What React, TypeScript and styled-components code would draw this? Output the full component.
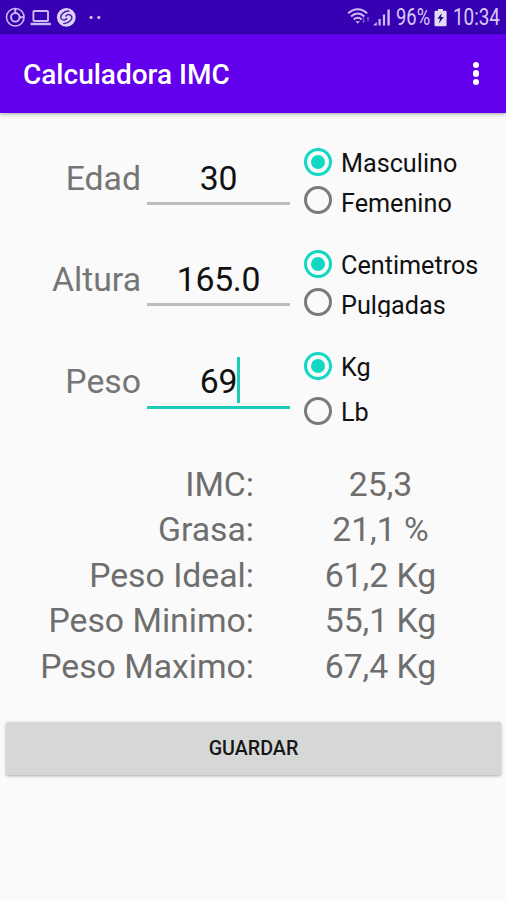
import { useState } from 'react';
import styled, { createGlobalStyle } from 'styled-components';

interface Option {
  label: string;
  clipped?: boolean;
}

interface Field {
  label: string;
  value: string;
  focused?: boolean;
  options: Option[];
  rowHeight: number;
}

const FIELDS: Field[] = [
  {
    label: 'Edad',
    value: '30',
    rowHeight: 38,
    options: [{ label: 'Masculino' }, { label: 'Femenino' }],
  },
  {
    label: 'Altura',
    value: '165.0',
    rowHeight: 38,
    options: [{ label: 'Centimetros' }, { label: 'Pulgadas', clipped: true }],
  },
  {
    label: 'Peso',
    value: '69',
    focused: true,
    rowHeight: 45,
    options: [{ label: 'Kg' }, { label: 'Lb' }],
  },
];

const RESULTS = [
  { label: 'IMC:', value: '25,3' },
  { label: 'Grasa:', value: '21,1 %' },
  { label: 'Peso Ideal:', value: '61,2 Kg' },
  { label: 'Peso Minimo:', value: '55,1 Kg' },
  { label: 'Peso Maximo:', value: '67,4 Kg' },
];

function StatusIcons() {
  return (
    <svg width="106" height="34" viewBox="0 0 106 34" fill="none" stroke="#cbbcf3">
      <circle cx="15.3" cy="17.3" r="8.8" strokeWidth="1.5" />
      <circle cx="15.3" cy="17.3" r="4.3" strokeWidth="1.9" />
      <path d="M15.3 8.5v4.5M19.6 17.3h4.5" strokeWidth="1.9" />
      <rect x="33.4" y="11" width="14.6" height="10" rx="0.8" strokeWidth="1.9" />
      <path d="M30.5 24h20.4" strokeWidth="2.4" />
      <circle cx="66.3" cy="17.3" r="9.4" fill="#dcd3f6" stroke="none" />
      <g stroke="#4a1fb5" strokeWidth="1.5" strokeLinecap="round">
        <path d="M68.8 11.1c-2.6-.3-5.2 1.3-6.9 3.2-1.7 2-1.4 4 .2 5.2 1.6 1.1 3.2.6 4.7-.9" />
        <path d="M63.8 23.5c2.6.3 5.2-1.3 6.9-3.2 1.7-2 1.4-4-.2-5.2-1.6-1.1-3.2-.6-4.7.9" />
      </g>
      <circle cx="91.1" cy="17.4" r="1.6" fill="#cbbcf3" stroke="none" />
      <circle cx="98.8" cy="17.4" r="1.6" fill="#cbbcf3" stroke="none" />
    </svg>
  );
}

function SignalIcons() {
  return (
    <svg width="48" height="34" viewBox="0 0 48 34" fill="none" stroke="#cbbcf3">
      <g strokeWidth="2">
        <path d="M1.2 13.4C6.7 7.8 14.7 7.8 20.2 13.4" />
        <path d="M4.1 16.5c3.9-3.9 9.3-3.9 13.2 0" />
        <path d="M6.8 19.5c2.2-2.3 5.6-2.3 7.8 0" />
      </g>
      <path d="M8.4 21.2H13l-2.3 2.6z" fill="#cbbcf3" stroke="none" />
      <path d="M16.6 17.5v4.4M21 17.2v4.4" stroke="#6f4bcb" strokeWidth="1.5" />
      <path d="M14.8 20.8l1.8 2.4 1.8-2.4zM19.2 18.8l1.8-2.4 1.8 2.4z" fill="#6f4bcb" stroke="none" />
      <path d="M26 25.5l3.8-3.6v3.6z" fill="#cbbcf3" stroke="none" />
      <path d="M32.6 25.5v-6.6M37 25.5V14.4" strokeWidth="2.2" />
      <path d="M41.6 25.5V9.5" strokeWidth="2.4" />
    </svg>
  );
}

function BatteryIcon() {
  return (
    <svg width="14" height="34" viewBox="0 0 14 34">
      <path d="M4 9h5v1.8h2.6q1 0 1 1v13.4q0 1-1 1H1.5q-1 0-1-1V11.8q0-1 1-1H4z" fill="#e3dbf8" />
      <path d="M7.8 12.9L3.4 18.8h2.7l-1.3 4.6L9.8 17H7z" fill="#280a84" />
    </svg>
  );
}

export default function App() {
  const [selected, setSelected] = useState([0, 0, 0]);

  const select = (field: number, option: number) => {
    setSelected(selected.map((s, i) => (i === field ? option : s)));
  };

  return (
    <Screen>
      <GlobalStyle />
      <StatusBar>
        <StatusIcons />
        <StatusRight>
          <SignalIcons />
          <StatusText width={38} gap={1}>
            <Condensed scale={0.8}>96%</Condensed>
          </StatusText>
          <BatteryIcon />
          <StatusText width={48} gap={5}>
            <Condensed scale={0.82}>10:34</Condensed>
          </StatusText>
        </StatusRight>
      </StatusBar>
      <AppBar>
        <Title>Calculadora IMC</Title>
        <MenuButton aria-label="menu">
          <Dot />
          <Dot />
          <Dot />
        </MenuButton>
      </AppBar>
      <Form>
        {FIELDS.map((field, i) => (
          <FormRow key={field.label}>
            <FieldLabel>{field.label}</FieldLabel>
            <FieldInput focused={field.focused}>
              <span>{field.value}</span>
              {field.focused && <Caret />}
            </FieldInput>
            <RadioGroup raised={field.focused}>
              {field.options.map((option, j) => (
                <RadioRow
                  key={option.label}
                  height={field.rowHeight}
                  onClick={() => select(i, j)}>
                  <Radio checked={selected[i] === j} />
                  <RadioLabel
                    lowered={j === 1 && field.rowHeight < 40}
                    clipped={option.clipped}>
                    {option.label}
                  </RadioLabel>
                </RadioRow>
              ))}
            </RadioGroup>
          </FormRow>
        ))}
      </Form>
      <Results>
        {RESULTS.map(({ label, value }) => (
          <ResultRow key={label}>
            <ResultLabel>{label}</ResultLabel>
            <ResultValue>{value}</ResultValue>
          </ResultRow>
        ))}
      </Results>
      <SaveButton>GUARDAR</SaveButton>
    </Screen>
  );
}

const GlobalStyle = createGlobalStyle`
  * {
    box-sizing: border-box;
  }
  body {
    margin: 0;
    background: #fafafa;
    font-family: Roboto, 'Liberation Sans', sans-serif;
  }
`;

const Screen = styled.div`
  width: 506px;
  height: 900px;
  overflow: hidden;
  background: #fafafa;
`;

const StatusBar = styled.div`
  display: flex;
  justify-content: space-between;
  height: 34px;
  padding-right: 5px;
  background: #3700b3;
`;

const StatusRight = styled.div`
  display: flex;
  align-items: center;
`;

const StatusText = styled.div<{ width: number; gap: number }>`
  width: ${({ width }) => width}px;
  margin-left: ${({ gap }) => gap}px;
  font-size: 23px;
  line-height: 34px;
  padding-top: 1px;
  white-space: nowrap;
  color: #d6caf6;
`;

const Condensed = styled.span<{ scale: number }>`
  display: inline-block;
  transform: scaleX(${({ scale }) => scale});
  transform-origin: left center;
`;

const AppBar = styled.header`
  display: flex;
  align-items: center;
  justify-content: space-between;
  height: 79px;
  padding: 0 27px 0 23px;
  background: #6200ee;
  box-shadow: 0 1px 4px rgba(0, 0, 0, 0.35);
`;

const Title = styled.h1`
  margin: 2px 0 0;
  font-size: 28px;
  font-weight: 500;
  line-height: 34px;
  color: #ffffff;
`;

const MenuButton = styled.button`
  display: flex;
  flex-direction: column;
  gap: 2.4px;
  padding: 0;
  border: none;
  background: none;
`;

const Dot = styled.span`
  width: 6.4px;
  height: 6.4px;
  border-radius: 50%;
  background: #ffffff;
`;

const Form = styled.div`
  padding-top: 30px;
`;

const FormRow = styled.div`
  display: grid;
  grid-template-columns: 141px 143px 1fr;
  column-gap: 6px;
  height: 101.5px;
`;

const FieldLabel = styled.label`
  margin-top: 15.5px;
  font-size: 33.75px;
  line-height: 40px;
  text-align: right;
  color: #757575;
`;

const FieldInput = styled.div<{ focused?: boolean }>`
  display: flex;
  justify-content: center;
  height: ${({ focused }) => (focused ? 62.5 : 61.5)}px;
  padding-top: 15.5px;
  font-size: 33.75px;
  line-height: 40px;
  letter-spacing: -0.3px;
  color: #111111;
  border-bottom: 3px solid ${({ focused }) => (focused ? '#1bcdb8' : '#bdbdbd')};
`;

const Caret = styled.span`
  width: 3px;
  height: 46px;
  margin: -5px -3px 0 0;
  background: #1bcdb8;
`;

const RadioGroup = styled.div<{ raised?: boolean }>`
  margin-top: ${({ raised }) => (raised ? -3 : 0)}px;
  padding-left: 8px;
`;

const RadioRow = styled.div<{ height: number }>`
  display: flex;
  align-items: center;
  height: ${({ height }) => height}px;
  cursor: pointer;
`;

const Radio = styled.span<{ checked: boolean }>`
  display: flex;
  align-items: center;
  justify-content: center;
  width: 28px;
  height: 28px;
  border: 3px solid ${({ checked }) => (checked ? '#10d8c2' : '#7a7a7a')};
  border-radius: 50%;
  &::after {
    content: '';
    width: 14px;
    height: 14px;
    border-radius: 50%;
    background: ${({ checked }) => (checked ? '#10d8c2' : 'transparent')};
  }
`;

const RadioLabel = styled.span<{ lowered?: boolean; clipped?: boolean }>`
  height: ${({ clipped }) => (clipped ? 26 : 30)}px;
  margin-top: ${({ lowered, clipped }) => (clipped ? 4 : lowered ? 8 : 4)}px;
  margin-left: 9px;
  overflow: hidden;
  font-size: 25.2px;
  line-height: 30px;
  color: #111111;
`;

const Results = styled.div`
  padding-top: 14px;
`;

const ResultRow = styled.div`
  display: grid;
  grid-template-columns: 254px 253px;
  height: 45.5px;
  font-size: 33.75px;
  line-height: 45.5px;
  color: #6e6e6e;
`;

const ResultLabel = styled.div`
  text-align: right;
`;

const ResultValue = styled.div`
  text-align: center;
`;

const SaveButton = styled.button`
  display: block;
  width: 495px;
  height: 53px;
  margin: 33px 0 0 6px;
  border: none;
  border-radius: 2px;
  background: #d6d8d7;
  box-shadow: 0 1px 3px rgba(0, 0, 0, 0.32);
  font-family: inherit;
  font-size: 19.7px;
  font-weight: 500;
  color: #171717;
`;
